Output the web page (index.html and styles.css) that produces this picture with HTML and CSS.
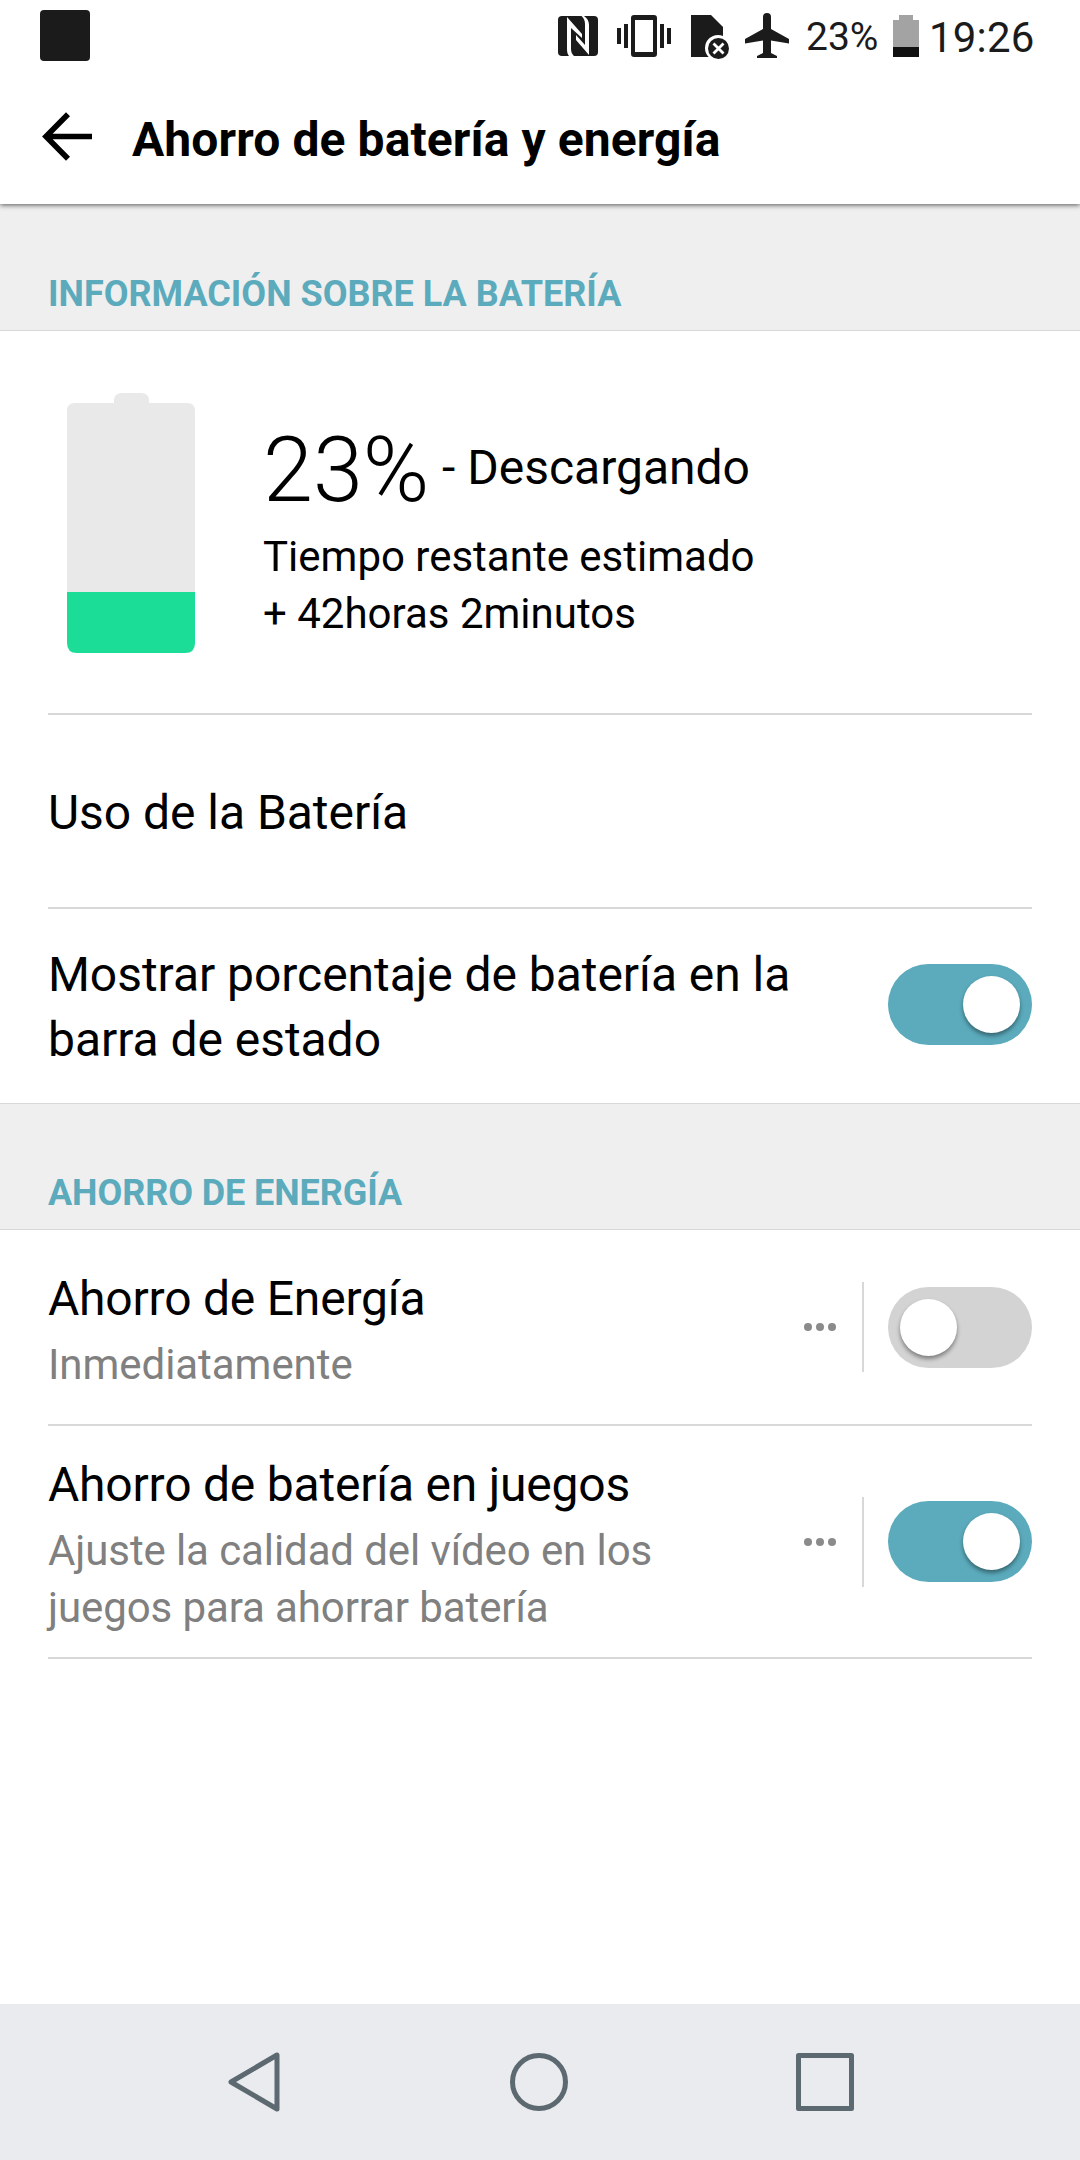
FILE: index.html
```html
<!DOCTYPE html>
<html lang="es">
<head>
<meta charset="utf-8">
<title>Ahorro de batería y energía</title>
<link rel="stylesheet" href="styles.css">
</head>
<body>
<div class="screen">
  <div class="statusbar">
    <span class="notification"></span>
    <svg class="status-icons" width="250" height="72" viewBox="540 0 250 72">
      <rect x="558" y="16" width="40" height="40" rx="4" fill="#1b1b1b"/>
      <path d="M569 56C567.500 54 567 52 567 49V17L582 34V38L571 28V49C571 52 572 54 574 56ZM584 16C587 18 589 21 589 25V55L576 40V35L585 45V24C585 21 584 18 581.500 16Z" fill="#fff"/>
      <path d="M617 28h4v16h-4zM624 24h4v24h-4zM660 24h4v24h-4zM667 28h4v16h-4z" fill="#1b1b1b"/>
      <path fill-rule="evenodd" d="M634 15h20q3 0 3 3v36q0 3-3 3h-20q-3 0-3-3V18q0-3 3-3zM635 20v32h18V20z" fill="#1b1b1b"/>
      <path d="M691 15h20l12 12v30h-32z" fill="#1b1b1b"/>
      <circle cx="718" cy="48" r="13" fill="#fff"/>
      <rect x="723" y="57.500" width="10" height="6" fill="#fff"/>
      <circle cx="718.500" cy="48.500" r="10.500" fill="#1b1b1b"/>
      <path d="M713.500 43.500l10 10M723.500 43.500l-10 10" stroke="#fff" stroke-width="2.800"/>
      <path d="M763 17q0-4 4-4t4 4v12l18 10v4.500l-18-3V53l6 3v2h-20v-2l6-3V40.500l-18 3V39l18-10z" transform="translate(0 0)" fill="#1b1b1b"/>
    </svg>
    <span class="status-percent">23%</span>
    <svg class="status-battery" width="26" height="42" viewBox="0 0 26 42"><path d="M6 0h14v5h6v27H0V5h6z" fill="#a3a3a3"/><path d="M0 32h26v10H0z" fill="#111"/></svg>
    <span class="clock">19:26</span>
  </div>
  <header class="appbar">
    <svg width="50" height="50" viewBox="0 0 50 50" fill="none" stroke="#000" stroke-width="5.600"><path d="M26 2.300L4 24.500l22 22.200M4 24.500h46"/></svg>
    <h1 class="title">Ahorro de batería y energía</h1>
  </header>
  <h2 class="section section-first">INFORMACIÓN SOBRE LA BATERÍA</h2>
  <div class="list">
    <div class="row battery">
      <svg width="128" height="260" viewBox="0 0 128 260"><path d="M8 10h39V8q0-8 8-8h19q8 0 8 8v2h38q8 0 8 8v182H0V18q0-8 8-8z" fill="#e9e9e9"/><path d="M0 199h128v51q0 10-10 10H10q-10 0-10-10z" fill="#1bdd98"/></svg>
      <div class="battery-info">
        <div class="level"><span class="level-value">23%</span><span class="level-state">- Descargando</span></div>
        <div class="estimate">Tiempo restante estimado<br>+ 42horas 2minutos</div>
      </div>
    </div>
    <div class="row usage"><div class="label">Uso de la Batería</div></div>
    <div class="row show-percent">
      <div class="label">Mostrar porcentaje de batería en la<br>barra de estado</div>
      <span class="switch on"></span>
    </div>
  </div>
  <h2 class="section">AHORRO DE ENERGÍA</h2>
  <div class="list">
    <div class="row saver">
      <div class="text"><div class="label">Ahorro de Energía</div><div class="summary">Inmediatamente</div></div>
      <span class="more"><i></i><i></i><i></i></span>
      <span class="switch"></span>
    </div>
    <div class="row games">
      <div class="text"><div class="label">Ahorro de batería en juegos</div><div class="summary">Ajuste la calidad del vídeo en los<br>juegos para ahorrar batería</div></div>
      <span class="more"><i></i><i></i><i></i></span>
      <span class="switch on"></span>
    </div>
  </div>
  <nav class="navbar">
    <svg width="52" height="60" viewBox="0 0 52 60"><path d="M49 3v54L3 30z"/></svg>
    <svg width="60" height="60" viewBox="0 0 60 60"><circle cx="30" cy="30" r="26.500"/></svg>
    <svg width="60" height="60" viewBox="0 0 60 60"><rect x="3.500" y="3.500" width="53" height="53"/></svg>
  </nav>
</div>
</body>
</html>
```

FILE: styles.css
```css
* { box-sizing: border-box; }
body { margin: 0; background: #fff; color: #000; font-family: Roboto, "Liberation Sans", sans-serif; }
h1, h2 { margin: 0; }
svg { display: block; flex: none; }
.screen { width: 1080px; height: 2160px; display: flex; flex-direction: column; overflow: hidden; }

.statusbar { height: 72px; flex: none; display: flex; align-items: flex-start; padding-left: 40px; color: #1b1b1b; }
.notification { width: 50px; height: 51px; margin: 10px 450px 0 0; border-radius: 4px; background: #1b1b1b; }
.status-percent { width: 87px; margin-left: 16px; font-size: 39px; line-height: 75px; }
.status-battery { margin-top: 15px; }
.clock { margin-left: 10px; font-size: 42px; line-height: 75px; letter-spacing: .2px; }

.appbar { height: 132px; flex: none; position: relative; display: flex; align-items: flex-start; padding: 40px 0 0 42px; gap: 40px; background: #fff; box-shadow: 0 1px 5px rgba(0, 0, 0, .65); clip-path: inset(0 0 -10px 0); }
.title { font-size: 48px; line-height: 56px; font-weight: 700; letter-spacing: .1px; }

.section { height: 127px; flex: none; padding: 67px 48px 0; border-top: 1px solid #d8d8d8; border-bottom: 1px solid #d8d8d8; background: #efefef; color: #5babbd; font-size: 36px; line-height: 44px; font-weight: 700; letter-spacing: -.08px; }
.section-first { padding-top: 68px; border-top: 0; letter-spacing: 0; }

.list { padding: 0 48px; }
.row { display: flex; align-items: center; border-bottom: 2px solid #d8d8d8; }
.list .show-percent { border-bottom: 0; }
.label { flex: 1; font-size: 48px; line-height: 65px; letter-spacing: -.04px; }
.battery { height: 384px; padding-left: 19px; align-items: flex-start; padding-top: 62px; }
.battery-info { padding: 31px 0 0 68px; }
.level { display: flex; height: 104px; }
.level-value { width: 179px; font-size: 90px; font-weight: 300; line-height: 94px; }
.level-state { font-size: 48px; line-height: 88px; }
.estimate { font-size: 42px; line-height: 57px; }
.usage { height: 194px; padding-top: 2px; }
.show-percent { height: 194px; padding-top: 2px; }
.show-percent .switch { margin-top: -5px; }
.text { flex: 1; }
.text .label { letter-spacing: -.21px; }
.summary { margin: 5px 0 -5px; color: #808080; font-size: 42px; line-height: 57px; letter-spacing: -.05px; }
.games .summary { letter-spacing: -.1px; }
.saver { height: 196px; }
.games { height: 233px; }

.more { display: flex; align-items: center; gap: 4px; height: 90px; width: 60px; margin-right: 24px; border-right: 2px solid #d8d8d8; }
.more i { width: 8px; height: 8px; border-radius: 50%; background: #8b8b8b; }
.switch { flex: none; width: 144px; height: 81px; padding: 12px; border-radius: 41px; background: #d3d3d3; }
.switch.on { padding-left: 75px; background: #5babbd; }
.switch::before { content: ""; display: block; width: 57px; height: 57px; border-radius: 50%; background: #fff; box-shadow: 0 3px 4px rgba(0, 0, 0, .4); }

.navbar { height: 156px; margin-top: auto; display: flex; align-items: center; padding-left: 228px; background: #e9ebee; fill: none; stroke: #5c6970; stroke-width: 5px; stroke-linejoin: round; }
.navbar svg + svg { margin-left: 229px; }
.navbar svg:last-child { margin-left: 226px; }
```
